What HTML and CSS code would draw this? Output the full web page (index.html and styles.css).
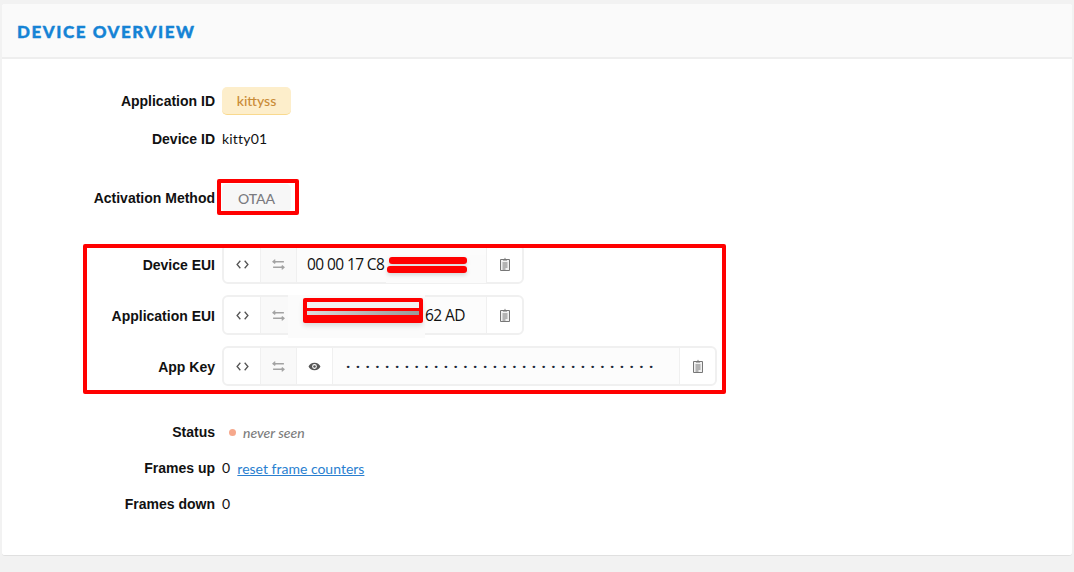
FILE: index.html
```html
<!DOCTYPE html>
<html lang="en">
<head>
<meta charset="utf-8">
<title>Device Overview</title>
<link rel="stylesheet" href="styles.css">
</head>
<body>
<svg class="defs" width="0" height="0" aria-hidden="true">
  <symbol id="i-code" viewBox="0 0 12 12"><path d="M4 2.500 1 6l3 3.500M8 2.500 11 6 8 9.500" fill="none" stroke="currentColor" stroke-width="1.200"/></symbol>
  <symbol id="i-swap" viewBox="0 0 12 12"><path d="M1 3.500h10M3 1.500 1 3.500l2 1.500M1 8.500h10M9 7l2 1.500-2 2" fill="none" stroke="currentColor" stroke-width="1.300"/></symbol>
  <symbol id="i-eye" viewBox="0 0 12 12"><path fill-rule="evenodd" d="M6 2.500c2.600 0 4.600 1.600 5.500 3.500-.9 1.900-2.900 3.500-5.500 3.500S1.400 7.900.5 6C1.400 4.100 3.400 2.500 6 2.500ZM6 3.800a2.200 2.200 0 1 0 0 4.400 2.200 2.200 0 0 0 0-4.400Z" fill="currentColor"/><circle cx="6" cy="6" r="1.200" fill="currentColor"/></symbol>
  <symbol id="i-clip" viewBox="0 0 12 14"><path d="M1.500 2.500h9v11h-9z" fill="#f1f1f1" stroke="currentColor" stroke-width="1"/><path d="M3.500 6h5M3.500 8h5M3.500 10h5M3.500 12h3" fill="none" stroke="currentColor" stroke-width="1"/><path d="M4 3.500V2h1.300L6 .5 6.700 2H8v1.500z" fill="currentColor"/></symbol>
</svg>
<main class="card">
  <h1 class="card-title">DEVICE OVERVIEW</h1>
  <div class="card-body">
    <div class="row row-app">
      <span class="label">Application ID</span>
      <span class="tag tag-app">kittyss</span>
    </div>
    <div class="row row-device">
      <span class="label">Device ID</span>
      <span class="value">kitty01</span>
    </div>
    <div class="row row-method">
      <span class="label">Activation Method</span>
      <span class="tag tag-method">OTAA</span>
    </div>
    <div class="keys">
      <div class="row">
        <span class="label label-key">Device EUI</span>
        <div class="field field-eui">
          <span class="cell cell-code"><svg class="icon"><use href="#i-code"/></svg></span>
          <span class="cell cell-swap"><svg class="icon"><use href="#i-swap"/></svg></span>
          <span class="hex">00 00 17 C8</span>
          <span class="cell cell-clip"><svg class="icon-clip"><use href="#i-clip"/></svg></span>
        </div>
      </div>
      <div class="row">
        <span class="label label-key">Application EUI</span>
        <div class="field field-eui">
          <span class="cell cell-code"><svg class="icon"><use href="#i-code"/></svg></span>
          <span class="cell cell-swap"><svg class="icon"><use href="#i-swap"/></svg></span>
          <span class="hex hex-end">62 AD</span>
          <span class="cell cell-clip"><svg class="icon-clip"><use href="#i-clip"/></svg></span>
        </div>
      </div>
      <div class="row">
        <span class="label label-key">App Key</span>
        <div class="field field-key">
          <span class="cell cell-code"><svg class="icon"><use href="#i-code"/></svg></span>
          <span class="cell cell-swap"><svg class="icon"><use href="#i-swap"/></svg></span>
          <span class="cell cell-eye"><svg class="icon"><use href="#i-eye"/></svg></span>
          <span class="hex hex-key">································</span>
          <span class="cell cell-clip"><svg class="icon-clip"><use href="#i-clip"/></svg></span>
        </div>
      </div>
    </div>
    <div class="row row-status">
      <span class="label">Status</span>
      <span class="status"><i class="dot"></i><em>never seen</em></span>
    </div>
    <div class="row row-stat">
      <span class="label">Frames up</span>
      <span class="value">0</span>
      <a class="reset" href="#">reset frame counters</a>
    </div>
    <div class="row row-stat">
      <span class="label">Frames down</span>
      <span class="value">0</span>
    </div>
  </div>
  <div class="mark mark-method"></div>
  <div class="mark mark-keys"></div>
  <div class="smudge smudge-device"></div>
  <div class="smudge smudge-app"></div>
  <div class="bar bar-1"></div>
  <div class="bar bar-2"></div>
  <div class="redact"><span class="redact-white"></span><span class="redact-red"></span><span class="redact-gray"></span></div>
</main>
</body>
</html>
```
FILE: styles.css
```css
* { box-sizing: border-box; }
html, body { height: 100%; }
body {
  margin: 0;
  padding: 4px 2px 0;
  background: #f2f2f2;
  font-family: Lato, "Liberation Sans", sans-serif;
  font-size: 14px;
  color: #111;
  overflow: hidden;
}
.defs { position: absolute; }
.card {
  position: relative;
  height: 552px;
  background: #fff;
  border-radius: 3px;
  border-bottom: 1px solid #e0e0e0;
}
.card-title {
  margin: 0;
  height: 55px;
  padding: 18px 15px 0;
  background: #fafafa;
  border-bottom: 2px solid #eeeeee;
  border-radius: 3px 3px 0 0;
  font: 900 17px/20px Lato, sans-serif;
  letter-spacing: 1.55px;
  -webkit-text-stroke: 0.4px #1583d5;
  color: #1583d5;
}
.card-body { display: flex; flex-direction: column; }
.row { display: flex; align-items: center; }
.label {
  flex: none;
  width: 213px;
  margin-right: 7px;
  text-align: right;
  font: 700 14px/20px "Liberation Sans", sans-serif;
  color: #111;
}
.label-key { padding-top: 2px; }
.value { line-height: 20px; letter-spacing: 0.2px; }
.row-app { margin-top: 28px; height: 28px; }
.row-device { margin-top: 14px; height: 20px; }
.row-method { margin-top: 35px; height: 28px; }
.tag {
  display: flex;
  align-items: center;
  justify-content: center;
  width: 69px;
  height: 28px;
  border-radius: 5px;
  font-weight: 500;
}
.tag-app {
  background: #fdeecb;
  border-bottom: 1px solid #f9d98e;
  color: #c98b37;
}
.tag-method {
  background: #f7f7f7;
  color: #7b7b80;
}
.keys {
  margin-top: 32px;
  display: flex;
  flex-direction: column;
  gap: 11px;
}
.field {
  display: flex;
  height: 40px;
  border: 2px solid #f0f0f0;
  border-radius: 6px;
  background: #fff;
}
.field-eui { width: 302px; }
.field-key { width: 495px; }
.cell {
  flex: none;
  display: flex;
  align-items: center;
  justify-content: center;
  color: #555;
}
.cell-code { width: 37px; border-right: 1px solid #f0f0f0; }
.cell-swap {
  width: 36px;
  background: #f9f9f9;
  border-right: 1px solid #f0f0f0;
  color: #a3a3a3;
}
.cell-eye { width: 36px; border-right: 1px solid #f0f0f0; }
.cell-clip { width: 36px; margin-left: auto; border-left: 1px solid #f0f0f0; color: #777; }
.icon { width: 13px; height: 13px; }
.icon-clip { width: 12px; height: 14px; }
.hex {
  flex: 1;
  padding-left: 10px;
  font: 400 15.5px/36px "Open Sans", sans-serif;
  letter-spacing: -0.6px;
  color: #111;
  background: #fcfcfc;
}
.hex-end { padding-left: 128px; }
.hex-key {
  padding-left: 13px;
  letter-spacing: 5.5px;
  font-weight: 700;
  font-size: 15px;
  line-height: 37px;
  color: #1c2a3a;
  white-space: nowrap;
  overflow: hidden;
}
.row-status { margin-top: 36px; height: 20px; }
.status { display: flex; align-items: center; margin-left: 7px; }
.dot {
  width: 7px;
  height: 7px;
  margin-right: 7px;
  border-radius: 50%;
  background: #f6a88c;
}
.status em { font-weight: 500; font-style: italic; color: #7d7d7d; }
.row-stat { margin-top: 16px; height: 20px; }
.reset {
  margin-left: 7px;
  color: #2a7fd0;
  text-decoration: underline;
}
.mark {
  position: absolute;
  border: 4px solid #ff0000;
  border-radius: 2px;
}
.mark-method { left: 215px; top: 175px; width: 82px; height: 36px; }
.mark-keys { left: 81px; top: 240px; width: 643px; height: 150px; }
.smudge {
  position: absolute;
  background: #fbfbfb;
}
.smudge-device { left: 384px; top: 251px; width: 100px; height: 28px; }
.smudge-app { left: 286px; top: 291px; width: 137px; height: 43px; }
.bar {
  position: absolute;
  background: #ff0000;
  border-radius: 3px;
  box-shadow: 0 2px 4px rgba(0, 0, 0, 0.15);
}
.bar-1 { left: 387px; top: 253px; width: 78px; height: 7px; }
.bar-2 { left: 385px; top: 262px; width: 80px; height: 7px; }
.redact {
  position: absolute;
  left: 301px;
  top: 294px;
  width: 120px;
  height: 25px;
  display: flex;
  flex-direction: column;
  padding: 4px 4px 8px;
  background: #ff0000;
  border-radius: 2px;
  box-shadow: 0 3px 5px rgba(0, 0, 0, 0.12);
}
.redact-white { flex: none; height: 6px; background: #f2f2f2; }
.redact-red { flex: none; height: 3px; }
.redact-gray { flex: none; height: 4px; background: linear-gradient(90deg, #ddd, #aaa 70%, #999); }
```
